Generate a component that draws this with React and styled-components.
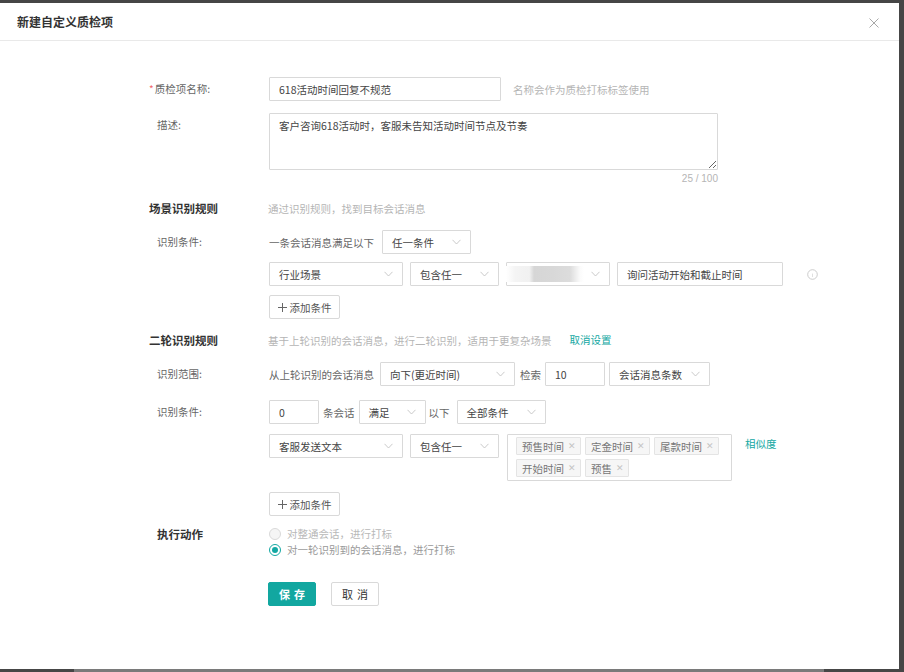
import React from "react";
import styled, { createGlobalStyle } from "styled-components";

const GlobalStyle = createGlobalStyle`
  html, body {
    margin: 0;
    padding: 0;
    background: #464646;
  }
  body {
    font-family: "Noto Sans CJK SC", "Noto Sans", sans-serif;
    font-size: 10.5px;
    color: #666;
  }
  * { box-sizing: border-box; }
`

const Page = styled.div`
  width: 904px;
  height: 672px;
  display: flex;
  flex-direction: column;
  background: #464646;
  overflow: hidden;
`
const Modal = styled.div`
  margin-top: 3px;
  width: 899px;
  height: 666px;
  background: #fff;
  display: flex;
  flex-direction: column;
`
const BottomStrip = styled.div`
  height: 3px;
  display: flex;
`
const StripPart = styled.div`
  margin-left: 74px;
  width: 750px;
  background: #7a7a7a;
`
const Header = styled.div`
  height: 38px;
  flex-shrink: 0;
  border-bottom: 1px solid #e9e9e9;
  padding: 0 17px;
  display: flex;
  align-items: center;
  justify-content: space-between;
`
const Title = styled.div`
  font-size: 12px;
  font-weight: 600;
  color: #333;
`
const CloseBtn = styled.div`
  width: 10px;
  height: 10px;
  margin-right: 3px;
  margin-top: 2px;
  display: flex;
`
const Body = styled.div`
  padding: 36px 0 0 149px;
  display: flex;
  flex-direction: column;
`
const Row = styled.div`
  display: flex;
  align-items: ${(p) => (p.$top ? "flex-start" : "center")};
  margin-top: ${(p) => p.$mt || 0}px;
`
const Label = styled.div`
  width: 120px;
  flex-shrink: 0;
  padding-left: ${(p) => (p.$required ? 0 : 8)}px;
  color: #666;
  line-height: ${(p) => p.$lh || 16}px;
  padding-top: ${(p) => p.$pt || 0}px;
`
const Star = styled.span`
  color: #f2686b;
  margin-right: 1px;
  font-size: 10px;
`
const SectionTitle = styled.div`
  width: ${(p) => (p.$indent ? 112 : 120)}px;
  margin-left: ${(p) => (p.$indent ? 8 : 0)}px;
  flex-shrink: 0;
  font-size: 11.5px;
  font-weight: 700;
  color: #333;
  line-height: ${(p) => p.$lh || 20}px;
`
const Hint = styled.span`
  color: #b5b5b5;
  margin-left: ${(p) => p.$ml || 0}px;
`
const Text = styled.span`
  color: #666;
  margin: 0 ${(p) => p.$mr || 4}px 0 ${(p) => p.$ml || 0}px;
  white-space: nowrap;
`
const Link = styled.span`
  color: #13a8a3;
  margin-left: ${(p) => p.$ml || 0}px;
  line-height: ${(p) => p.$lh || 16}px;
`
const Input = styled.input`
  width: ${(p) => p.$w}px;
  height: 24px;
  border: 1px solid #d9d9d9;
  border-radius: 1px;
  padding: 0 9px;
  font-family: inherit;
  font-size: 10.5px;
  color: #444;
  outline: none;
  margin-right: ${(p) => p.$mr || 0}px;
  flex-shrink: 0;
`
const TextArea = styled.textarea`
  width: 449px;
  height: 57px;
  border: 1px solid #d9d9d9;
  border-radius: 1px;
  padding: 4px 9px;
  font-family: inherit;
  font-size: 10.5px;
  line-height: 16px;
  color: #444;
  resize: both;
  outline: none;
  display: block;
`
const Counter = styled.div`
  width: 449px;
  text-align: right;
  color: #b5b5b5;
  font-family: "Liberation Sans", sans-serif;
  font-size: 10px;
  line-height: 12px;
  margin-top: 3px;
`
const SelectBox = styled.div`
  position: relative;
  width: ${(p) => p.$w}px;
  height: 24px;
  border: 1px solid #d9d9d9;
  border-radius: 1px;
  padding: 0 9px;
  display: flex;
  align-items: center;
  justify-content: space-between;
  color: #444;
  margin-right: ${(p) => p.$mr || 0}px;
  flex-shrink: 0;
  white-space: nowrap;
`
const Redacted = styled.div`
  position: absolute;
  left: -1px;
  top: -1px;
  bottom: -1px;
  width: 78px;
  background: linear-gradient(
    to right,
    #fff 0%,
    #f4f4f4 12%,
    #f1f1f1 30%,
    #d6d6d6 36%,
    #d8d8d8 60%,
    #dcdcdc 82%,
    #fbfbfb 95%,
    #fff 100%
  );
  clip-path: inset(4px 0 4px 0);
  filter: blur(0.6px);
`
const AddButton = styled.div`
  width: 71px;
  height: 24px;
  border: 1px solid #d9d9d9;
  border-radius: 2px;
  display: flex;
  align-items: center;
  justify-content: center;
  color: #555;
  margin-left: 120px;
  gap: 3px;
`
const TagBox = styled.div`
  width: 225px;
  min-height: 47px;
  border: 1px solid #d9d9d9;
  border-radius: 1px;
  padding: 2px 4px 2px 8px;
  display: flex;
  flex-wrap: wrap;
  align-content: flex-start;
  gap: 4px 4px;
  margin-right: 13px;
  flex-shrink: 0;
`
const Tag = styled.span`
  height: 18px;
  padding: 0 4px 0 5px;
  background: #f6f6f6;
  border: 1px solid #e4e4e4;
  border-radius: 1px;
  color: #777;
  display: inline-flex;
  align-items: center;
  gap: 4px;
`
const TagClose = styled.span`
  color: #c4c4c4;
  font-size: 9px;
  font-family: "Liberation Sans", sans-serif;
`
const RadioGroup = styled.div`
  display: flex;
  flex-direction: column;
`
const RadioItem = styled.div`
  display: flex;
  align-items: center;
  line-height: 16px;
  color: ${(p) => (p.$disabled ? "#b8b8b8" : "#999")};
  gap: 6px;
`
const RadioDot = styled.span`
  width: 12px;
  height: 12px;
  border-radius: 50%;
  border: 1px solid ${(p) => (p.$checked ? "#13a8a3" : "#d9d9d9")};
  background: ${(p) => (p.$disabled ? "#f5f5f5" : "#fff")};
  display: flex;
  align-items: center;
  justify-content: center;
  &::after {
    content: "";
    width: 6px;
    height: 6px;
    border-radius: 50%;
    background: ${(p) => (p.$checked ? "#13a8a3" : "transparent")};
  }
`
const Actions = styled.div`
  display: flex;
  gap: 15px;
  margin: 24px 0 0 119px;
`
const Button = styled.div`
  width: 48px;
  height: 24px;
  border-radius: 2px;
  display: flex;
  align-items: center;
  justify-content: center;
  letter-spacing: 4px;
  padding-left: 4px;
  font-size: 11px;
  background: ${(p) => (p.$primary ? "#12a7a0" : "#fff")};
  color: ${(p) => (p.$primary ? "#fff" : "#333")};
  border: 1px solid ${(p) => (p.$primary ? "#12a7a0" : "#d9d9d9")};
  font-weight: ${(p) => (p.$primary ? 600 : 400)};
`
const InfoIcon = styled.span`
  margin-left: 24px;
  display: flex;
`

const Chevron = () => (
  <svg width="9" height="6" viewBox="0 0 9 6">
    <path d="M0.5 0.8 L4.5 5 L8.5 0.8" fill="none" stroke="#c4c4c4" strokeWidth="0.9" />
  </svg>
);

const Select = ({ w, mr, children }) => (
  <SelectBox $w={w} $mr={mr}>
    <span>{children}</span>
    <Chevron />
  </SelectBox>
);

const Plus = () => (
  <svg width="9" height="9" viewBox="0 0 9 9">
    <path d="M4.5 0 V9 M0 4.5 H9" stroke="#666" strokeWidth="1" />
  </svg>
);

export default function App() {
  const tags = ["预售时间", "定金时间", "尾款时间", "开始时间", "预售"];
  return (
    <Page>
      <GlobalStyle />
      <Modal>
        <Header>
          <Title>新建自定义质检项</Title>
          <CloseBtn>
            <svg width="10" height="10" viewBox="0 0 10 10">
              <path d="M0.5 0.5 L9.5 9.5 M9.5 0.5 L0.5 9.5" stroke="#a8a8a8" strokeWidth="1" />
            </svg>
          </CloseBtn>
        </Header>
        <Body>
          <Row>
            <Label $required>
              <Star>*</Star>质检项名称:
            </Label>
            <Input $w={232} readOnly value="618活动时间回复不规范" />
            <Hint $ml={12}>名称会作为质检打标标签使用</Hint>
          </Row>
          <Row $mt={12} $top>
            <Label $pt={4}>描述:</Label>
            <div>
              <TextArea readOnly value="客户咨询618活动时，客服未告知活动时间节点及节奏" />
              <Counter>25 / 100</Counter>
            </div>
          </Row>

          <Row $mt={13}>
            <SectionTitle>场景识别规则</SectionTitle>
            <Hint $ml={-1}>通过识别规则，找到目标会话消息</Hint>
          </Row>
          <Row $mt={12}>
            <Label>识别条件:</Label>
            <Text $mr={8}>一条会话消息满足以下</Text>
            <Select w={89}>任一条件</Select>
          </Row>
          <Row $mt={8}>
            <Label />
            <Select w={134} mr={7}>行业场景</Select>
            <Select w={89} mr={7}>包含任一</Select>
            <SelectBox $w={104} $mr={7}>
              <Redacted />
              <span />
              <Chevron />
            </SelectBox>
            <Input $w={166} readOnly value="询问活动开始和截止时间" />
            <InfoIcon>
              <svg width="11" height="11" viewBox="0 0 11 11">
                <circle cx="5.5" cy="5.5" r="4.8" fill="none" stroke="#c6c6c6" strokeWidth="0.9" />
                <path d="M5.5 4.6 V8" stroke="#dcdcdc" strokeWidth="0.9" />
              </svg>
            </InfoIcon>
          </Row>
          <Row $mt={9}>
            <AddButton>
              <Plus />
              添加条件
            </AddButton>
          </Row>

          <Row $mt={11}>
            <SectionTitle>二轮识别规则</SectionTitle>
            <Hint $ml={-1}>基于上轮识别的会话消息，进行二轮识别，适用于更复杂场景</Hint>
            <Link $ml={18}>取消设置</Link>
          </Row>
          <Row $mt={12}>
            <Label>识别范围:</Label>
            <Text $mr={6}>从上轮识别的会话消息</Text>
            <Select w={135} mr={5}>向下(更近时间)</Select>
            <Text>检索</Text>
            <Input $w={60} $mr={4} readOnly value="10" />
            <Select w={101}>会话消息条数</Select>
          </Row>
          <Row $mt={14}>
            <Label>识别条件:</Label>
            <Input $w={50} $mr={4} readOnly value="0" />
            <Text>条会话</Text>
            <Select w={67} mr={3}>满足</Select>
            <Text $mr={7}>以下</Text>
            <Select w={89}>全部条件</Select>
          </Row>
          <Row $mt={10} $top>
            <Label />
            <Select w={134} mr={7}>客服发送文本</Select>
            <Select w={89} mr={8}>包含任一</Select>
            <TagBox>
              {tags.map((t) => (
                <Tag key={t}>
                  {t}
                  <TagClose>✕</TagClose>
                </Tag>
              ))}
            </TagBox>
            <Link $lh={20}>相似度</Link>
          </Row>
          <Row $mt={11}>
            <AddButton>
              <Plus />
              添加条件
            </AddButton>
          </Row>

          <Row $mt={10} $top>
            <SectionTitle $indent $lh={16}>执行动作</SectionTitle>
            <RadioGroup>
              <RadioItem $disabled>
                <RadioDot $disabled />
                对整通会话，进行打标
              </RadioItem>
              <RadioItem>
                <RadioDot $checked />
                对一轮识别到的会话消息，进行打标
              </RadioItem>
            </RadioGroup>
          </Row>
          <Actions>
            <Button $primary>保存</Button>
            <Button>取消</Button>
          </Actions>
        </Body>
      </Modal>
      <BottomStrip>
        <StripPart />
      </BottomStrip>
    </Page>
  );
}
